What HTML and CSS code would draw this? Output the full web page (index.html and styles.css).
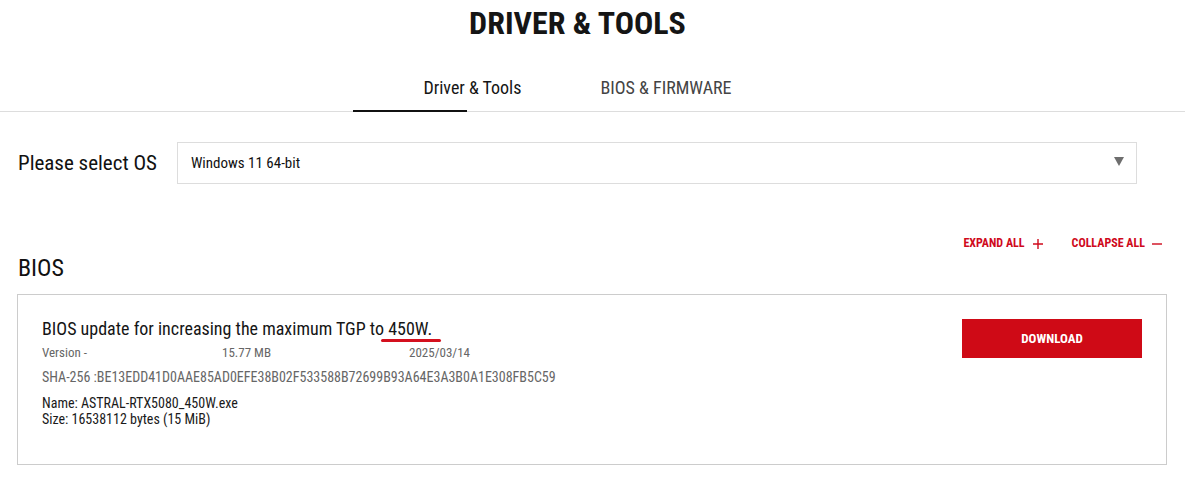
FILE: index.html
```html
<!DOCTYPE html>
<html>
<head>
<meta charset="utf-8">
<link rel="stylesheet" href="styles.css">
</head>
<body>
<header class="page-head">
  <h1 class="title">DRIVER &amp; TOOLS</h1>
  <nav class="tabs">
    <div class="tab active">Driver &amp; Tools</div>
    <div class="tab">BIOS &amp; FIRMWARE</div>
  </nav>
</header>
<main class="content">
  <section class="os-row">
    <label class="os-label">Please select OS</label>
    <div class="select">
      <span class="select-value">Windows 11 64-bit</span>
      <span class="caret"></span>
    </div>
  </section>
  <div class="toggles">
    <span class="toggle">EXPAND ALL <svg class="sign" width="10" height="10" viewBox="0 0 10 10"><path d="M0 5H10M5 0V10" stroke="currentColor" stroke-width="1.4" fill="none"/></svg></span>
    <span class="toggle">COLLAPSE ALL <svg class="sign" width="10" height="10" viewBox="0 0 10 10"><path d="M0 5H10" stroke="currentColor" stroke-width="1.4" fill="none"/></svg></span>
  </div>
  <h2 class="section-title">BIOS</h2>
  <div class="card">
    <div class="card-info">
      <div class="item-title">BIOS update for increasing the maximum TGP to<span class="mark"> 450W.</span></div>
      <div class="meta">
        <span>Version -</span>
        <span>15.77 MB</span>
        <span>2025/03/14</span>
      </div>
      <div class="sha">SHA-256 :BE13EDD41D0AAE85AD0EFE38B02F533588B72699B93A64E3A3B0A1E308FB5C59</div>
      <div class="desc">Name: ASTRAL-RTX5080_450W.exe<br>Size: 16538112 bytes (15 MiB)</div>
    </div>
    <button class="download">DOWNLOAD</button>
  </div>
</main>
</body>
</html>
```
FILE: styles.css
```css
* { box-sizing: border-box; }
body {
  margin: 0;
  font-family: "Roboto Condensed", Roboto, "Liberation Sans", Arial, sans-serif;
  color: #181818;
  background: #fff;
}
.page-head {
  display: flex;
  flex-direction: column;
  align-items: center;
  padding-right: 30px;
  border-bottom: 1px solid #dddddd;
}
.title {
  margin: 4px 0 0;
  font-size: 32px;
  font-weight: 700;
  line-height: 38px;
  color: #151515;
}
.tabs {
  display: flex;
  gap: 79px;
  margin-top: 35px;
}
.tab {
  position: relative;
  font-size: 18px;
  line-height: 22px;
  color: #444;
  padding-bottom: 12px;
}
.tab.active { color: #151515; }
.tab.active::after {
  content: "";
  position: absolute;
  left: -70px;
  width: 114px;
  bottom: -1px;
  height: 2px;
  background: #111;
}
.content {
  padding: 30px 18px 0 17px;
}
.os-row {
  display: flex;
  align-items: center;
  gap: 20px;
}
.os-label {
  padding-left: 1px;
  font-size: 21px;
  color: #111;
}
.select {
  flex: 1;
  margin-right: 30px;
  height: 42px;
  border: 1px solid #dddddd;
  display: flex;
  align-items: center;
  justify-content: space-between;
  padding: 0 12px 0 13px;
}
.select-value { font-size: 15px; color: #111; }
.caret {
  width: 0;
  height: 0;
  border-left: 5px solid transparent;
  border-right: 5px solid transparent;
  border-top: 9px solid #6e6e6e;
  margin-bottom: 3px;
}
.toggles {
  display: flex;
  justify-content: flex-end;
  gap: 29px;
  margin-top: 52px;
  padding-right: 5px;
}
.toggle {
  font-size: 12px;
  font-weight: 700;
  color: #cf0a1c;
  display: flex;
  align-items: center;
  gap: 8px;
}
.toggle + .toggle { gap: 7px; }
.sign { display: block; margin-top: 1px; }
.section-title {
  margin: 3px 0 0;
  padding-left: 1px;
  font-size: 24px;
  font-weight: 400;
  line-height: 30px;
  color: #111;
}
.card {
  margin-top: 11px;
  border: 1px solid #cccccc;
  display: flex;
  justify-content: space-between;
  align-items: flex-start;
  padding: 24px 24px 37px 24px;
}
.item-title {
  font-size: 18px;
  line-height: 20px;
  color: #151515;
}
.mark { position: relative; }
.mark::after {
  content: "";
  position: absolute;
  left: -3px;
  right: -9px;
  bottom: -3px;
  height: 3px;
  border-radius: 2px;
  background: #d4101e;
}
.meta {
  display: grid;
  grid-template-columns: 180px 187px auto;
  font-size: 13px;
  color: #666;
  margin-top: 6px;
}
.sha {
  margin-top: 9px;
  font-size: 14px;
  color: #666;
}
.desc {
  margin-top: 10px;
  font-size: 14px;
  line-height: 16px;
  color: #1a1a1a;
}
.download {
  width: 180px;
  height: 39px;
  border: none;
  background: #cf0a16;
  color: #fff;
  font-family: inherit;
  font-size: 13px;
  font-weight: 700;
}
```
